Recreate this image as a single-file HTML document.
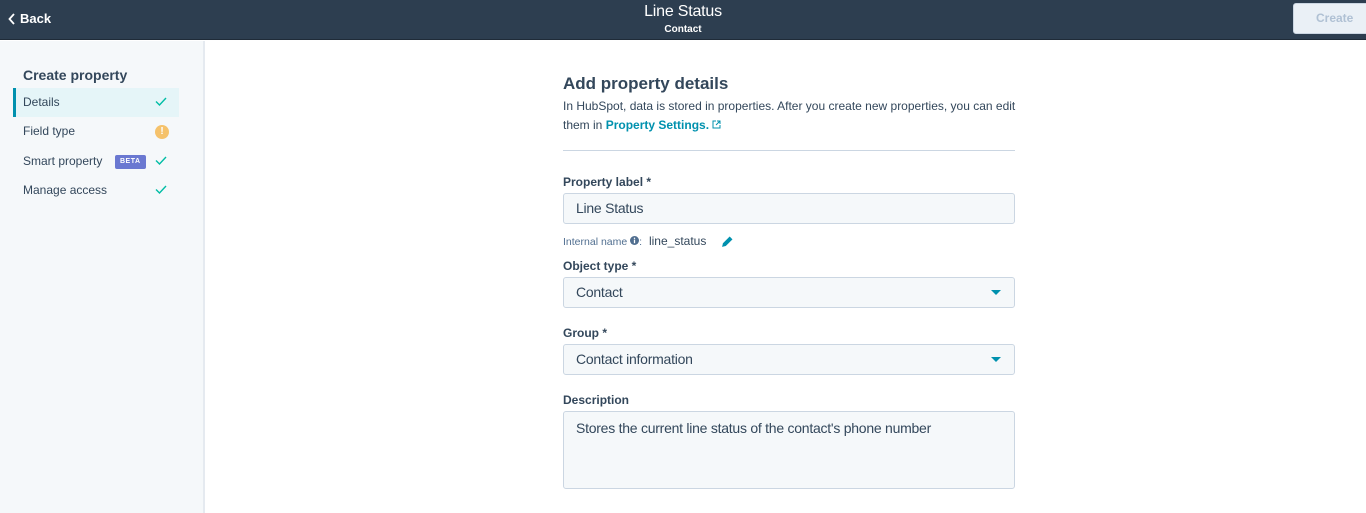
<!DOCTYPE html>
<html><head><meta charset="utf-8"><style>
*{box-sizing:border-box;margin:0;padding:0}
body{width:1366px;height:513px;overflow:hidden;background:#fff;font-family:"Liberation Sans",sans-serif;color:#33475b;position:relative}
.top{position:absolute;left:0;top:0;width:1366px;height:40px;background:#2d3e50;border-bottom:1px solid #1f2b38}
.back{position:absolute;left:8px;top:11px;color:#fff;font-weight:bold;font-size:13px;display:flex;align-items:center;gap:4px}
.title{position:absolute;left:0;width:1366px;text-align:center;top:3px;color:#fff;font-size:16px;letter-spacing:-.2px}
.sub{position:absolute;left:0;width:1366px;text-align:center;top:24px;color:#fff;font-size:10px;font-weight:bold}
.create{position:absolute;left:1293px;top:3px;width:80px;height:31px;background:#eaf0f6;border:1px solid #cbd6e2;border-radius:3px;color:#b0c1d4;font-weight:bold;font-size:12px;line-height:29px;padding-left:22px}
.side{position:absolute;left:0;top:41px;width:205px;height:472px;background:#f5f8fa;border-right:2px solid #e5eaf0}
.side h3{position:absolute;left:23px;top:26px;font-size:14px;font-weight:bold;color:#33475b}
.item{position:absolute;left:13px;width:166px;height:29px;font-size:12px;line-height:29px;padding-left:10px;color:#33475b}
.item.act{background:#e5f5f8;border-left:3px solid #0091ae;padding-left:7px}
.chk{position:absolute;left:142px;top:9px}
.act .chk{left:139px}
.beta{position:absolute;left:102px;top:8px;background:#6a78d1;color:#fff;font-size:7px;font-weight:bold;padding:0 5px;height:14px;line-height:14px;border-radius:2px;letter-spacing:.5px}
.warn{position:absolute;left:142px;top:8px;width:14px;height:14px;border-radius:50%;background:#f5c26b;color:#fff;font-size:10px;font-weight:bold;text-align:center;line-height:14px}
.main{position:absolute;left:563px;top:0;width:452px}
h2{position:absolute;top:74px;font-size:17px;font-weight:bold;white-space:nowrap}
.p{position:absolute;top:97px;font-size:12px;line-height:19px;width:460px}
.p b{color:#0091ae}
.hr{position:absolute;top:150px;width:452px;height:1px;background:#cbd6e2}
.lbl{position:absolute;font-size:12px;font-weight:bold}
.inp{position:absolute;width:452px;height:31px;background:#f5f8fa;border:1px solid #cbd6e2;border-radius:3px;font-size:14px;line-height:29px;padding-left:12px;color:#33475b;letter-spacing:-.25px}
.car{position:absolute;right:13px;top:12px;width:0;height:0;border-left:5px solid transparent;border-right:5px solid transparent;border-top:5px solid #0091ae}
</style></head><body>
<div class="top">
<div class="back"><svg width="8" height="12" viewBox="0 0 8 12"><path d="M6 1L1.5 6 6 11" stroke="#fff" stroke-width="1.8" fill="none"/></svg>Back</div>
<div class="title">Line Status</div>
<div class="sub">Contact</div>
<div class="create">Create</div>
</div>
<div class="side">
<h3>Create property</h3>
<div class="item act" style="top:47px">Details<svg class="chk" width="12" height="9" viewBox="0 0 12 9"><path d="M1 4.5l3.5 3.5L11 1" stroke="#00bda5" stroke-width="1.4" fill="none"/></svg></div>
<div class="item" style="top:76px">Field type<div class="warn">!</div></div>
<div class="item" style="top:106px">Smart property<span class="beta">BETA</span><svg class="chk" width="12" height="9" viewBox="0 0 12 9"><path d="M1 4.5l3.5 3.5L11 1" stroke="#00bda5" stroke-width="1.4" fill="none"/></svg></div>
<div class="item" style="top:135px">Manage access<svg class="chk" width="12" height="9" viewBox="0 0 12 9"><path d="M1 4.5l3.5 3.5L11 1" stroke="#00bda5" stroke-width="1.4" fill="none"/></svg></div>
</div>
<div class="main">
<h2>Add property details</h2>
<div class="p">In HubSpot, data is stored in properties. After you create new properties, you can edit them in <b>Property Settings.</b> <svg width="9" height="9" viewBox="0 0 9 9"><path d="M4 1H1v7h7V5M5 1h3v3M8 1L4 5" stroke="#0091ae" stroke-width="1" fill="none"/></svg></div>
<div class="hr"></div>
<div class="lbl" style="top:175px">Property label *</div>
<div class="inp" style="top:193px">Line Status</div>
<div style="position:absolute;top:234px;font-size:10.5px;color:#516f90">Internal name <svg width="9" height="9" viewBox="0 0 10 10"><circle cx="5" cy="5" r="5" fill="#516f90"/><rect x="4.3" y="4" width="1.4" height="4" fill="#fff"/><circle cx="5" cy="2.6" r=".8" fill="#fff"/></svg>: <span style="font-size:12px;color:#33475b;margin-left:4px">line_status</span>
<svg style="margin-left:12px;vertical-align:-3px" width="13" height="13" viewBox="0 0 12 12"><path d="M1 11l.8-3.4L8 1.4l2.6 2.6-6.2 6.2z" fill="#0091ae"/></svg></div>
<div class="lbl" style="top:259px">Object type *</div>
<div class="inp" style="top:277px">Contact<div class="car"></div></div>
<div class="lbl" style="top:326px">Group *</div>
<div class="inp" style="top:344px">Contact information<div class="car"></div></div>
<div class="lbl" style="top:393px">Description</div>
<div class="inp" style="top:411px;height:78px;line-height:32px">Stores the current line status of the contact's phone number</div>
</div>
</body></html>
